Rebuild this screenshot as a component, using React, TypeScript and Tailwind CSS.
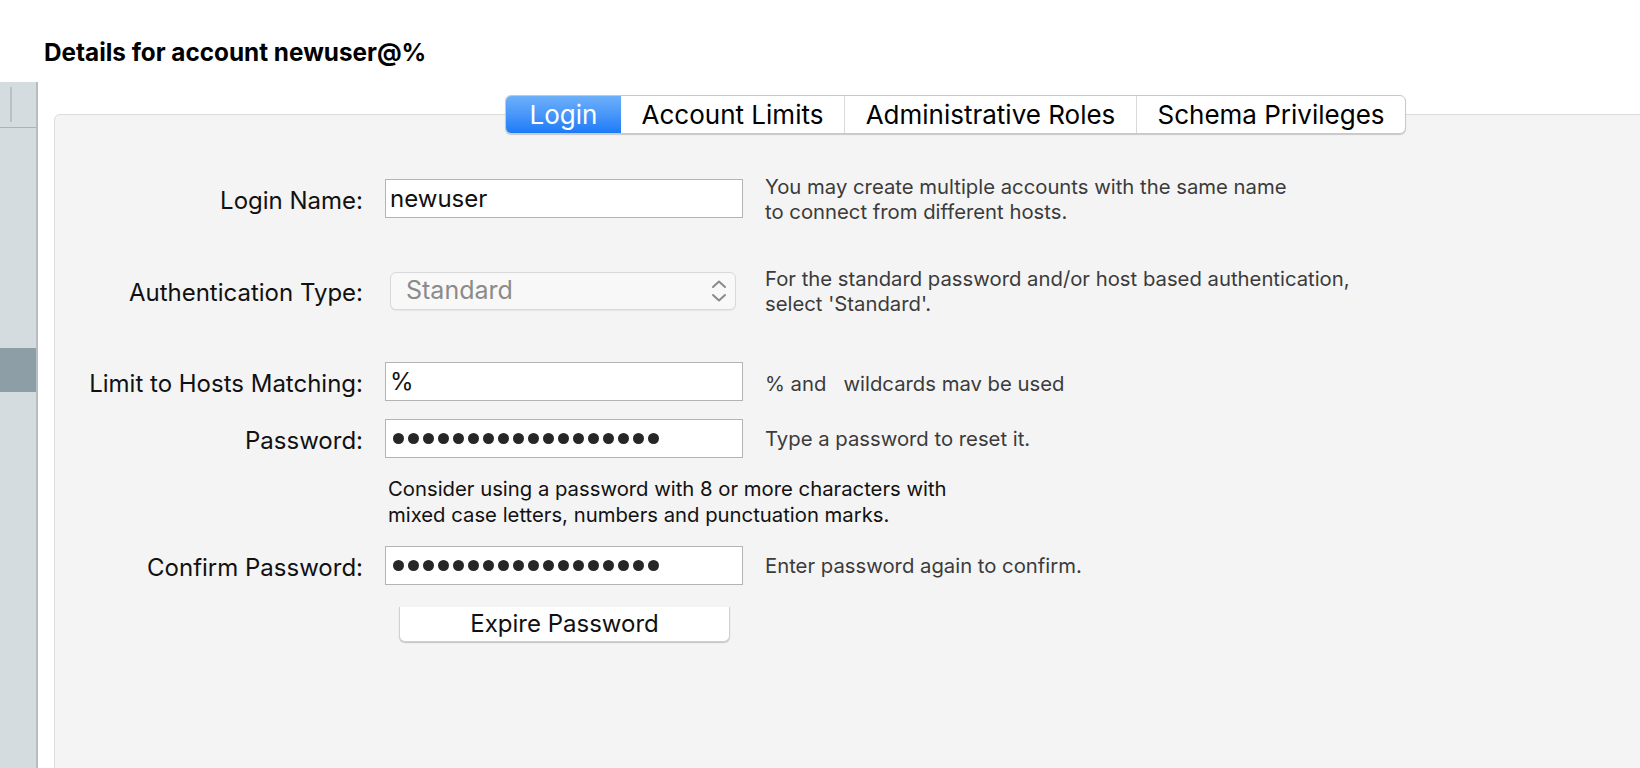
import React from "react";

function Dots() {
  return (
    <div className="flex items-center gap-[4px] pl-[7px]">
      {Array.from({ length: 18 }).map((_, i) => (
        <span key={i} className="block w-[11px] h-[11px] rounded-full bg-[#262626]" />
      ))}
    </div>
  );
}

function Sidebar() {
  return (
    <div className="w-[38px] shrink-0 bg-[#d4dcdf] border-r-2 border-[#b6bcbf] flex flex-col">
      <div className="h-[46px] border-b border-[#aab3b7] pt-[5px] pl-[10px]">
        <div className="w-[2px] h-[35px] bg-[#b7c0c4]" />
      </div>
      <div className="mt-[220px] h-[44px] bg-[#8e9ea7]" />
    </div>
  );
}

function Tabs() {
  return (
    <div className="relative z-10 ml-[451px] flex w-[901px] h-[39px] rounded-[6px] border border-[#c9c9c9] bg-white overflow-hidden shadow-[0_1px_1px_rgba(0,0,0,0.18)] text-[26px] leading-none">
      <div className="w-[115px] flex items-center justify-center bg-linear-to-b from-[#6db0fb] to-[#1a7bf6] text-white">
        Login
      </div>
      <div className="w-[223px] flex items-center justify-center text-black">Account Limits</div>
      <div className="w-[292px] flex items-center justify-center border-l border-[#d9d9d9] text-black">
        Administrative Roles
      </div>
      <div className="w-[269px] flex items-center justify-center border-l border-[#d9d9d9] text-black">
        Schema Privileges
      </div>
    </div>
  );
}

function Label({ children }: { children: React.ReactNode }) {
  return (
    <div className="w-[308px] shrink-0 pt-[5px] text-right text-[24px] leading-none text-[#111]">{children}</div>
  );
}

function Help({ children }: { children: React.ReactNode }) {
  return (
    <div className="ml-[22px] text-[20.3px] leading-[25px] text-[#3b3b3b] whitespace-nowrap">{children}</div>
  );
}

function TextBox({ children }: { children: React.ReactNode }) {
  return (
    <div className="ml-[22px] w-[358px] h-[39px] shrink-0 border border-[#b4b4b4] bg-white flex items-center pl-[4px] text-[24px] text-[#111]">
      {children}
    </div>
  );
}

export default function App() {
  return (
    <div className="w-[1640px] h-[768px] bg-white overflow-hidden font-[Inter,sans-serif] text-[#111]">
      <div className="pl-[44px] pt-[40px] text-[24.3px] leading-[24px] font-bold text-black">
        Details for account newuser@%
      </div>
      <div className="mt-[18px] flex h-[686px]">
        <Sidebar />
        <div className="ml-[16px] flex-1 min-w-0 flex flex-col pt-[13px]">
          <Tabs />
          <div className="-mt-[20px] -mr-[40px] -mb-[40px] flex-1 rounded-tl-[6px] border border-[#dcdcdc] bg-[#f4f4f4] pt-[64px]">
            {/* Login Name */}
            <div className="flex items-center h-[39px]">
              <Label>Login Name:</Label>
              <TextBox>newuser</TextBox>
              <Help>
                <div>You may create multiple accounts with the same name</div>
                <div>to connect from different hosts.</div>
              </Help>
            </div>
            {/* Authentication Type */}
            <div className="mt-[53px] flex items-center h-[39px]">
              <Label>Authentication Type:</Label>
              <div className="ml-[22px] w-[358px] shrink-0 pl-[5px]">
                <div className="w-[346px] h-[38px] rounded-[6px] border border-[#d9d9d9] bg-[#f8f8f8] shadow-[0_1px_1px_rgba(0,0,0,0.06)] flex items-center justify-between pl-[15px] pr-[8px] text-[25px] text-[#8b8b8b]">
                  <span>Standard</span>
                  <svg width="16" height="24" viewBox="0 0 16 24" fill="none" stroke="#8a8a8a" strokeWidth="2" strokeLinecap="round" strokeLinejoin="round">
                    <path d="M2 8 L8 2.5 L14 8" />
                    <path d="M2 16 L8 21.5 L14 16" />
                  </svg>
                </div>
              </div>
              <Help>
                <div>For the standard password and/or host based authentication,</div>
                <div>select 'Standard'.</div>
              </Help>
            </div>
            {/* Limit to Hosts Matching */}
            <div className="mt-[52px] flex items-center h-[39px]">
              <Label>Limit to Hosts Matching:</Label>
              <TextBox>%</TextBox>
              <Help>
                <div className="pt-[3px]">% and&nbsp;&nbsp; wildcards mav be used</div>
              </Help>
            </div>
            {/* Password */}
            <div className="mt-[18px] flex items-center h-[39px]">
              <Label>Password:</Label>
              <div className="ml-[22px] w-[358px] h-[39px] shrink-0 border border-[#b4b4b4] bg-white flex items-center">
                <Dots />
              </div>
              <Help>
                <div>Type a password to reset it.</div>
              </Help>
            </div>
            <div className="mt-[18px] ml-[333px] text-[20.3px] leading-[26px] text-[#111]">
              <div>Consider using a password with 8 or more characters with</div>
              <div>mixed case letters, numbers and punctuation marks.</div>
            </div>
            {/* Confirm Password */}
            <div className="mt-[18px] flex items-center h-[39px]">
              <Label>Confirm Password:</Label>
              <div className="ml-[22px] w-[358px] h-[39px] shrink-0 border border-[#b4b4b4] bg-white flex items-center">
                <Dots />
              </div>
              <Help>
                <div>Enter password again to confirm.</div>
              </Help>
            </div>
            <div className="mt-[22px] ml-[344px] w-[331px] h-[35px] rounded-b-[6px] bg-white border-x border-b border-[#d0d0d0] shadow-[0_1px_1px_rgba(0,0,0,0.2)] flex items-center justify-center text-[24px] text-[#111]">
              Expire Password
            </div>
          </div>
        </div>
      </div>
    </div>
  );
}
